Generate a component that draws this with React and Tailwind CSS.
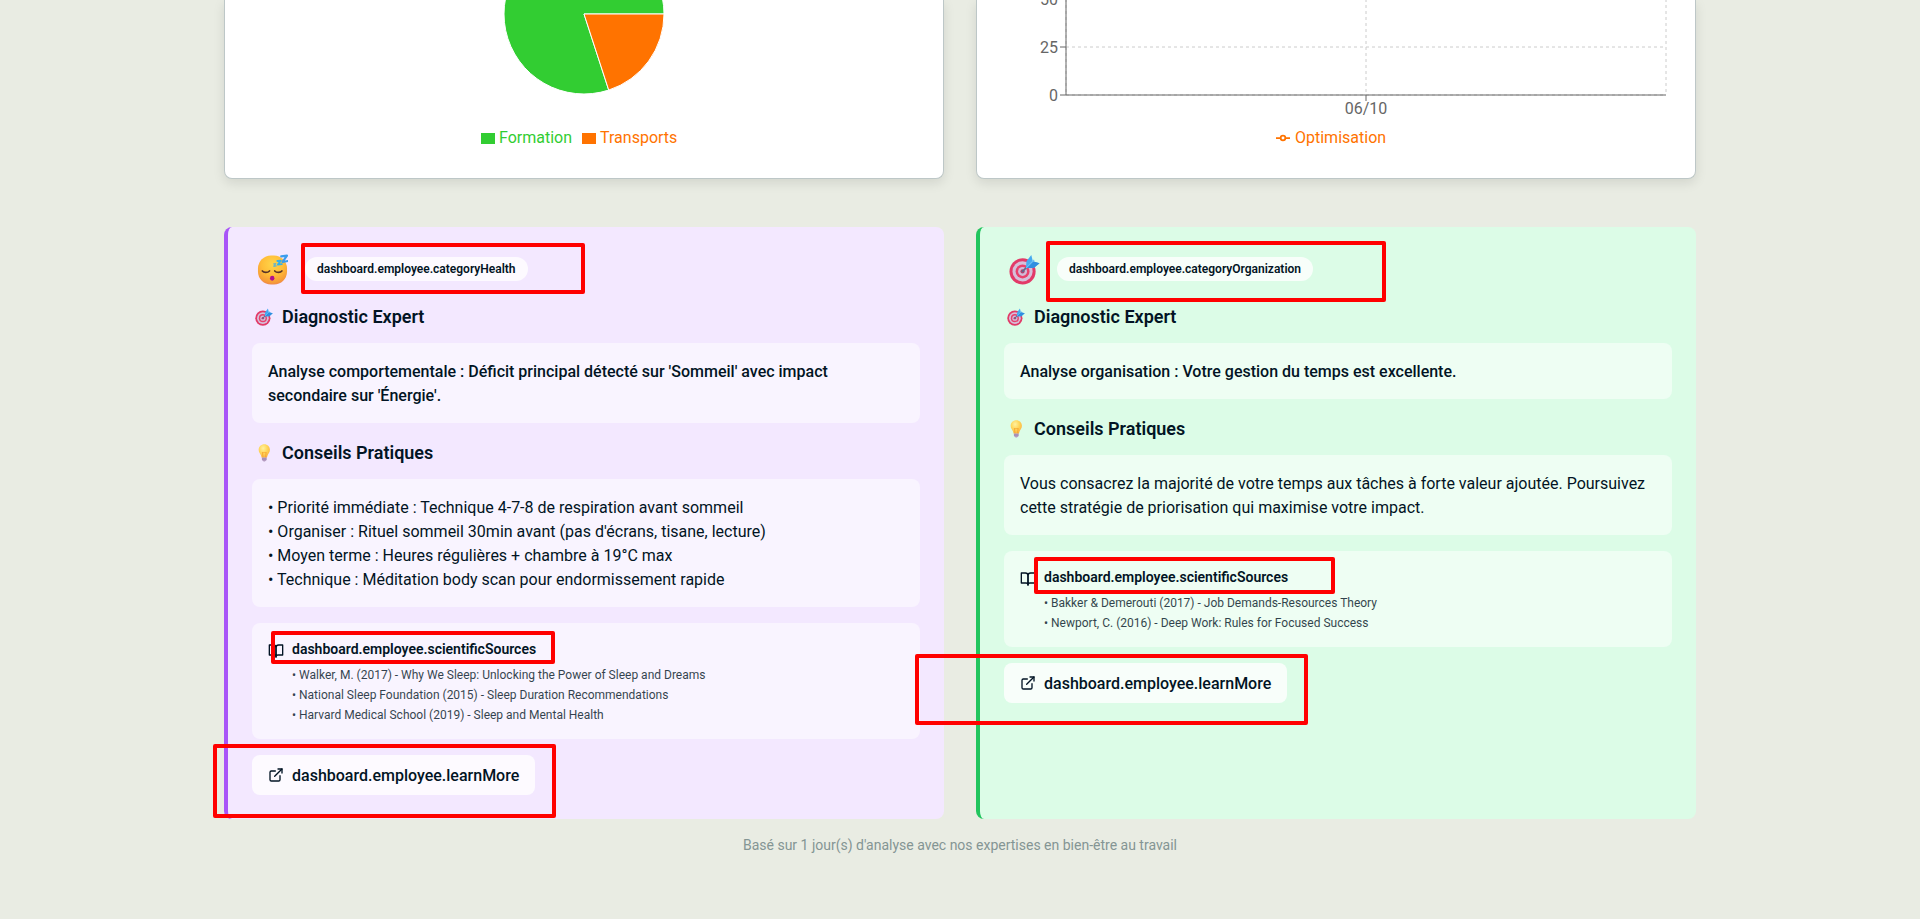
import React from "react";

function SleepingFace({ className }) {
  return (
    <svg viewBox="0 0 32 32" className={className} aria-hidden="true">
      <defs>
        <radialGradient id="faceFill" cx="0.5" cy="0.3" r="0.75">
          <stop offset="0" stopColor="#ffd54a" />
          <stop offset="0.5" stopColor="#ffbd38" />
          <stop offset="0.85" stopColor="#f69a38" />
          <stop offset="1" stopColor="#e77a5a" />
        </radialGradient>
      </defs>
      <rect x="1" y="1.5" width="30" height="30" rx="13.5" fill="url(#faceFill)" />
      <path d="M5.5 17.5c1.5 2 5.6 2 7.4 0M18.3 17.5c1.8 2 5.9 2 7.4 0" fill="none" stroke="#5a3428" strokeWidth="1.7" strokeLinecap="round" />
      <ellipse cx="15.7" cy="25" rx="2.3" ry="2.5" fill="#b1118d" />
      <g fill="none" stroke="#3b9dec" strokeLinejoin="round" strokeLinecap="round">
        <path d="M25 2.5l6-.8-4.6 6.5 5.6-1" strokeWidth="2.2" />
        <path d="M21 7.2l3.6-.4-3 4.2 4-.6" strokeWidth="1.9" stroke="#35b0e8" />
        <path d="M17.3 10.2l2-.2-1.9 2.6 2.4-.3" strokeWidth="1.4" stroke="#6fb4c4" />
      </g>
    </svg>
  );
}

function Target({ className }) {
  return (
    <svg viewBox="0 0 32 32" className={className} aria-hidden="true">
      <circle cx="14" cy="18" r="13.5" fill="#e23a68" />
      <circle cx="14" cy="18" r="10.4" fill="#d6c0da" />
      <circle cx="14" cy="18" r="7.2" fill="#e8416d" />
      <circle cx="14" cy="18" r="4.6" fill="#d0bcd8" />
      <circle cx="14" cy="18" r="2.2" fill="#b93f6c" />
      <path d="M14 18L21 11" stroke="#5c6a8e" strokeWidth="1.8" strokeLinecap="round" />
      <path d="M17.500 14.500L18 7.500 23 1l1.600 6.400L31.500 9.500 25.500 14.500z" fill="#45aaf0" />
      <path d="M17.500 14.500L24.500 7.500 31.500 9.500 25.500 14.500z" fill="#2f8fe0" />
      <path d="M17.500 14.500L26 6" stroke="#6cc0f6" strokeWidth="1.200" />
    </svg>
  );
}

function Bulb({ className }) {
  return (
    <svg viewBox="0 0 32 32" className={className} aria-hidden="true">
      <defs>
        <radialGradient id="bulbFill" cx="0.4" cy="0.3" r="0.8">
          <stop offset="0" stopColor="#fff1a0" />
          <stop offset="0.45" stopColor="#ffd75a" />
          <stop offset="1" stopColor="#f9a93a" />
        </radialGradient>
      </defs>
      <path d="M16.500 0.500c5.600 0 10 4.300 10 9.900 0 4.300-2.600 6.700-4 9.500-.7 1.500-.8 3.500-1.600 4.500h-8.800c-.8-1-.9-3-1.600-4.500-1.400-2.800-4-5.200-4-9.500C6.500 4.800 10.900.5 16.500.5z" fill="url(#bulbFill)" />
      <path d="M14.300 24l-1.200-9.500c1 1.500 2.600 1.500 3.400 0 .8 1.500 2.400 1.500 3.400 0L18.700 24" fill="none" stroke="#f59e2c" strokeWidth="1.300" />
      <path d="M12.300 24h8.400v3.600c0 1.500-1.300 2.200-2.200 2.400-.5 1.300-3.500 1.300-4 0-.9-.2-2.200-.9-2.200-2.400z" fill="#b39ac0" />
      <path d="M12.300 26.700h8.400" stroke="#8d74a0" strokeWidth="0.900" />
    </svg>
  );
}

const iconProps = {
  viewBox: "0 0 24 24",
  fill: "none",
  stroke: "currentColor",
  strokeWidth: 2,
  strokeLinecap: "round",
  strokeLinejoin: "round",
  "aria-hidden": true,
};

function BookIcon() {
  return (
    <svg {...iconProps} className="mt-1 h-4 w-4 shrink-0">
      <path d="M2 3h6a4 4 0 0 1 4 4v14a3 3 0 0 0-3-3H2z" />
      <path d="M22 3h-6a4 4 0 0 0-4 4v14a3 3 0 0 1 3-3h7z" />
    </svg>
  );
}

function ExternalIcon() {
  return (
    <svg {...iconProps} className="h-4 w-4 shrink-0">
      <path d="M15 3h6v6" />
      <path d="M10 14 21 3" />
      <path d="M18 13v6a2 2 0 0 1-2 2H5a2 2 0 0 1-2-2V8a2 2 0 0 1 2-2h6" />
    </svg>
  );
}

function ChartCard({ children }) {
  return (
    <section className="flex h-[179px] flex-col rounded-b-lg border border-t-0 border-[#bdc7c7] bg-white shadow-[0_4px_12px_rgba(0,0,0,0.1)]">
      {children}
    </section>
  );
}

function PieCard() {
  return (
    <ChartCard>
      <svg className="block h-[126px] w-full" viewBox="0 0 718 126">
        <g stroke="#fff" strokeWidth="1">
          <path d="M359 14L439 14A80 80 0 1 0 383.720 90.080Z" fill="#32cd32" />
          <path d="M359 14L439 14A80 80 0 0 1 383.720 90.080Z" fill="#ff7300" />
        </g>
      </svg>
      <ul className="flex items-center pl-[256px] text-base leading-6">
        <li className="mr-2.5 flex items-center text-[#32cd32]">
          <span className="mr-1 h-[11px] w-3.5 bg-[#32cd32]" />
          Formation
        </li>
        <li className="flex items-center text-[#ff7300]">
          <span className="mr-1 h-[11px] w-3.5 bg-[#ff7300]" />
          Transports
        </li>
      </ul>
    </ChartCard>
  );
}

function LineCard() {
  return (
    <ChartCard>
      <svg className="block h-[126px] w-full" viewBox="977 0 718 126">
        <g stroke="#ccc" strokeDasharray="3 3" fill="none">
          <path d="M1066 47H1666M1066 95H1666" />
          <path d="M1066 -97V95M1366 -97V95M1666 -97V95" />
        </g>
        <g stroke="#666" fill="none">
          <path d="M1066 -97V95M1066 95H1666M1060 47H1066M1060 95H1066M1366 95V101" />
        </g>
        <g fill="#666" fontSize="16">
          <text x="1058" y="4.700" textAnchor="end">50</text>
          <text x="1058" y="52.700" textAnchor="end">25</text>
          <text x="1058" y="100.700" textAnchor="end">0</text>
          <text x="1366" y="114.400" textAnchor="middle">06/10</text>
        </g>
      </svg>
      <div className="flex items-center pl-[299px] text-base leading-6 text-[#ff7300]">
        <svg className="mr-[5px] h-3.5 w-3.5" viewBox="0 0 32 32" fill="none" stroke="#ff7300" strokeWidth="4">
          <path d="M0 16h10.667A5.333 5.333 0 1 1 21.333 16H32M21.333 16A5.333 5.333 0 1 1 10.667 16" />
        </svg>
        Optimisation
      </div>
    </ChartCard>
  );
}

function Heading({ icon, children }) {
  return (
    <h3 className="mb-3 flex h-7 items-center text-lg leading-7 font-semibold">
      <span className="flex w-[30px] shrink-0 items-center pl-[3px]">{icon}</span>
      {children}
    </h3>
  );
}

function InsightCard({ tone, emoji, category, diagnostic, advice, sources }) {
  return (
    <article className={`rounded-lg border-l-4 p-6 ${tone}`}>
      <header className="mb-4 flex h-9 items-center">
        <span className="flex w-[53px] shrink-0 pl-[5px]">{emoji}</span>
        <span className="rounded-full bg-white/80 px-3 py-1 text-xs font-semibold">{category}</span>
      </header>
      <Heading icon={<Target className="h-[18px] w-[18px]" />}>Diagnostic Expert</Heading>
      <p className="mb-4 rounded-lg bg-white/50 px-4 pt-[17px] pb-[15px] font-medium">{diagnostic}</p>
      <Heading icon={<Bulb className="h-[18px] w-[18px]" />}>Conseils Pratiques</Heading>
      <p className="mb-4 rounded-lg bg-white/50 px-4 pt-[17px] pb-[15px] whitespace-pre-line">{advice}</p>
      <div className="mb-4 flex items-start gap-2 rounded-lg bg-white/50 p-4">
        <BookIcon />
        <div>
          <h4 className="mb-2 text-sm font-semibold">dashboard.employee.scientificSources</h4>
          <ul className="space-y-1 text-xs opacity-80">
            {sources.map((s) => (
              <li key={s}>• {s}</li>
            ))}
          </ul>
        </div>
      </div>
      <a className="inline-flex h-10 items-center gap-2 rounded-lg bg-white/80 px-4 align-top font-medium">
        <ExternalIcon />
        <span className="pt-0.5">dashboard.employee.learnMore</span>
      </a>
    </article>
  );
}

const highlights = [
  "left-[301px] top-[243px] w-[284px] h-[51px]",
  "left-[1046px] top-[241px] w-[340px] h-[61px]",
  "left-[271px] top-[631px] w-[284px] h-[33px]",
  "left-[213px] top-[744px] w-[343px] h-[74px]",
  "left-[1034px] top-[557px] w-[301px] h-[37px]",
  "left-[915px] top-[654px] w-[393px] h-[71px]",
];

export default function App() {
  return (
    <div className="relative h-[919px] w-full overflow-hidden bg-[#e9ece3] font-[Roboto,sans-serif] text-[#021424]">
      <main className="mx-auto w-[1472px]">
        <div className="mb-12 grid grid-cols-2 gap-8">
          <PieCard />
          <LineCard />
        </div>
        <div className="grid grid-cols-2 gap-8">
          <InsightCard
            tone="border-[#a855f7] bg-[#f3e8ff]"
            emoji={<SleepingFace className="h-[31px] w-[31px]" />}
            category="dashboard.employee.categoryHealth"
            diagnostic="Analyse comportementale : Déficit principal détecté sur 'Sommeil' avec impact secondaire sur 'Énergie'."
            advice={
              "• Priorité immédiate : Technique 4-7-8 de respiration avant sommeil\n• Organiser : Rituel sommeil 30min avant (pas d'écrans, tisane, lecture)\n• Moyen terme : Heures régulières + chambre à 19°C max\n• Technique : Méditation body scan pour endormissement rapide"
            }
            sources={[
              "Walker, M. (2017) - Why We Sleep: Unlocking the Power of Sleep and Dreams",
              "National Sleep Foundation (2015) - Sleep Duration Recommendations",
              "Harvard Medical School (2019) - Sleep and Mental Health",
            ]}
          />
          <InsightCard
            tone="border-[#22c55e] bg-[#dcfce7]"
            emoji={<Target className="h-[31px] w-[31px]" />}
            category="dashboard.employee.categoryOrganization"
            diagnostic="Analyse organisation : Votre gestion du temps est excellente."
            advice="Vous consacrez la majorité de votre temps aux tâches à forte valeur ajoutée. Poursuivez cette stratégie de priorisation qui maximise votre impact."
            sources={[
              "Bakker & Demerouti (2017) - Job Demands-Resources Theory",
              "Newport, C. (2016) - Deep Work: Rules for Focused Success",
            ]}
          />
        </div>
        <p className="mt-4 text-center text-sm text-[#849594]">
          Basé sur 1 jour(s) d'analyse avec nos expertises en bien-être au travail
        </p>
      </main>
      {highlights.map((pos) => (
        <div key={pos} className={`pointer-events-none absolute rounded-[2px] border-4 border-[#ff0000] ${pos}`} />
      ))}
    </div>
  );
}
